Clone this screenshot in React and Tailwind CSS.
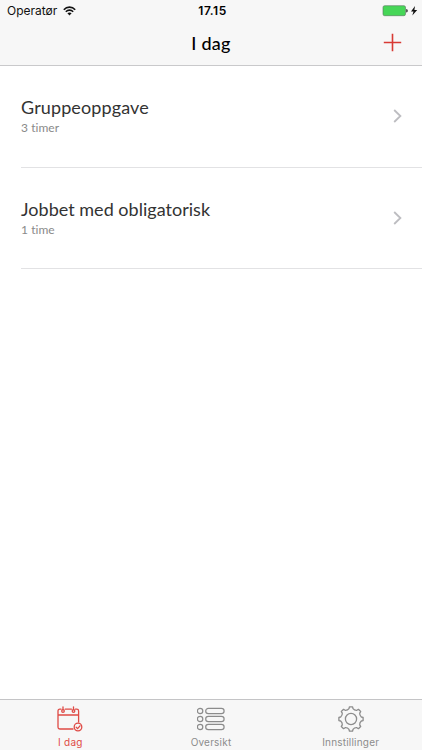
const entries = [
  { title: "Gruppeoppgave", time: "3 timer", titleClass: "tracking-[0.12px]" },
  { title: "Jobbet med obligatorisk", time: "1 time", titleClass: "tracking-[0.02px]" },
];

function gearPath() {
  const point = (radius, degrees) => {
    const a = (degrees * Math.PI) / 180;
    return `${(14 + radius * Math.sin(a)).toFixed(2)} ${(14 - radius * Math.cos(a)).toFixed(2)}`;
  };
  let d = `M${point(12.2, -7.5)}`;
  for (let i = 0; i < 8; i++) {
    const a = i * 45;
    d += ` L${point(12.2, a + 7.5)} L${point(10.5, a + 11)} Q${point(9.2, a + 22.5)} ${point(10.5, a + 34)} L${point(12.2, a + 37.5)}`;
  }
  return `${d}Z`;
}

function WifiIcon() {
  return (
    <svg className="ml-[6px] h-[10px] w-[13px]" viewBox="0 0 13 10" fill="none" stroke="#111" strokeWidth="1.6">
      <path d="M.8 3.7C4 .2 9 .2 12.2 3.7M2.8 5.8C5 3.6 8 3.6 10.2 5.8" />
      <path d="M4.4 7.3C5.6 6.1 7.4 6.1 8.6 7.3L6.5 9.5Z" fill="#111" stroke="none" />
    </svg>
  );
}

function BatteryIcon() {
  return (
    <svg className="h-[12px] w-[36px]" viewBox="0 0 36 12">
      <rect x="1" y=".7" width="22.5" height="10" rx="1.6" fill="#46d657" stroke="#55745a" strokeWidth=".6" />
      <path d="M24.3 4c1.8.2 1.8 3.3 0 3.5Z" fill="#111" />
      <path d="M33 1 29 6.4h2.5L30.3 10.6 35.2 4.9h-2.8Z" fill="#111" />
    </svg>
  );
}

function CalendarIcon() {
  return (
    <svg className="h-[28px] w-[28px]" viewBox="0 0 28 28" fill="none" stroke="#df4b46" strokeWidth="1.3" strokeLinecap="round">
      <path d="M5 4.2H3.8Q2 4.2 2 6v16.2Q2 24 3.8 24H17M9.2 4.2H15.4M19.4 4.2h1.4Q22.6 4.2 22.6 6v11M2 10h20.6" />
      <path d="M7 1.8v3M17.5 1.8v3" />
      <circle cx="7" cy="6" r="1.3" />
      <circle cx="17.5" cy="6" r="1.3" />
      <circle cx="22" cy="22" r="3.8" />
      <path d="m20.2 22.2 1.4 1.4 2.4-2.8" />
    </svg>
  );
}

function ListIcon() {
  return (
    <svg className="h-[28px] w-[28px]" viewBox="0 0 28 28" fill="none" stroke="#8c8c8c" strokeWidth="1.2">
      {[6, 14, 22].map((y) => (
        <g key={y}>
          <circle cx="3.1" cy={y} r="2.7" />
          <rect x="8.7" y={y - 2.7} width="18.4" height="5.4" rx="2.7" />
        </g>
      ))}
    </svg>
  );
}

function GearIcon() {
  return (
    <svg className="h-[28px] w-[28px]" viewBox="0 0 28 28" fill="none" stroke="#8c8c8c" strokeWidth="1.3" strokeLinejoin="round">
      <path d={gearPath()} />
      <circle cx="14" cy="14" r="5.6" />
    </svg>
  );
}

export default function App() {
  return (
    <div className="flex h-[750px] w-[422px] flex-col overflow-hidden bg-white font-[Lato,sans-serif] text-black">
      <header className="h-[66px] shrink-0 border-b border-[#c9c9cb] bg-[#f7f7f7]">
        <div className="grid h-[22px] grid-cols-3 items-center pl-[7px] pr-[4px] font-[Inter,sans-serif] text-[12px]">
          <div className="flex items-center text-[#111]">
            <span>Operatør</span>
            <WifiIcon />
          </div>
          <span className="text-center font-semibold tracking-[0.5px]">17.15</span>
          <div className="flex justify-end"><BatteryIcon /></div>
        </div>
        <div className="grid h-[43px] grid-cols-3 items-center">
          <h1 className="col-start-2 text-center text-[18px] font-medium tracking-[0.3px]">I dag</h1>
          <button className="mr-[20px] justify-self-end" aria-label="Legg til">
            <svg className="-mt-[3px] block h-[19px] w-[19px]" viewBox="0 0 19 19" stroke="#d83a34" strokeWidth="1.6">
              <path d="M9.5 .8v17.4M.8 9.5h17.4" />
            </svg>
          </button>
        </div>
      </header>
      <main className="flex-1">
        {entries.map((entry) => (
          <div key={entry.title} className="ml-[21px] flex h-[101.5px] items-center justify-between border-b border-[#e2e2e4] pr-[20px]">
            <div className="pt-[0.5px]">
              <div className={`text-[18px] leading-[22px] text-[#333] ${entry.titleClass}`}>{entry.title}</div>
              <div className="text-[12px] leading-[19px] tracking-[0.05px] text-[#8a8a8a]">{entry.time}</div>
            </div>
            <svg className="h-[14px] w-[9px]" viewBox="0 0 9 14" fill="none" stroke="#bdbdc1" strokeWidth="1.8">
              <path d="m1.2 1 6.2 6-6.2 6" />
            </svg>
          </div>
        ))}
      </main>
      <nav className="grid h-[51px] shrink-0 grid-cols-3 border-t border-[#c4c4c6] bg-[#f7f7f7] pt-[5px] font-[Inter,sans-serif] text-[10px] leading-[18px] text-[#8c8c8c]">
        <div className="flex flex-col items-center text-[#df4b46]"><CalendarIcon /><span className="tracking-[0.3px]">I dag</span></div>
        <div className="flex flex-col items-center"><ListIcon /><span className="tracking-[0.2px]">Oversikt</span></div>
        <div className="flex flex-col items-center pr-[2px]"><GearIcon /><span className="tracking-[0.2px]">Innstillinger</span></div>
      </nav>
    </div>
  );
}
